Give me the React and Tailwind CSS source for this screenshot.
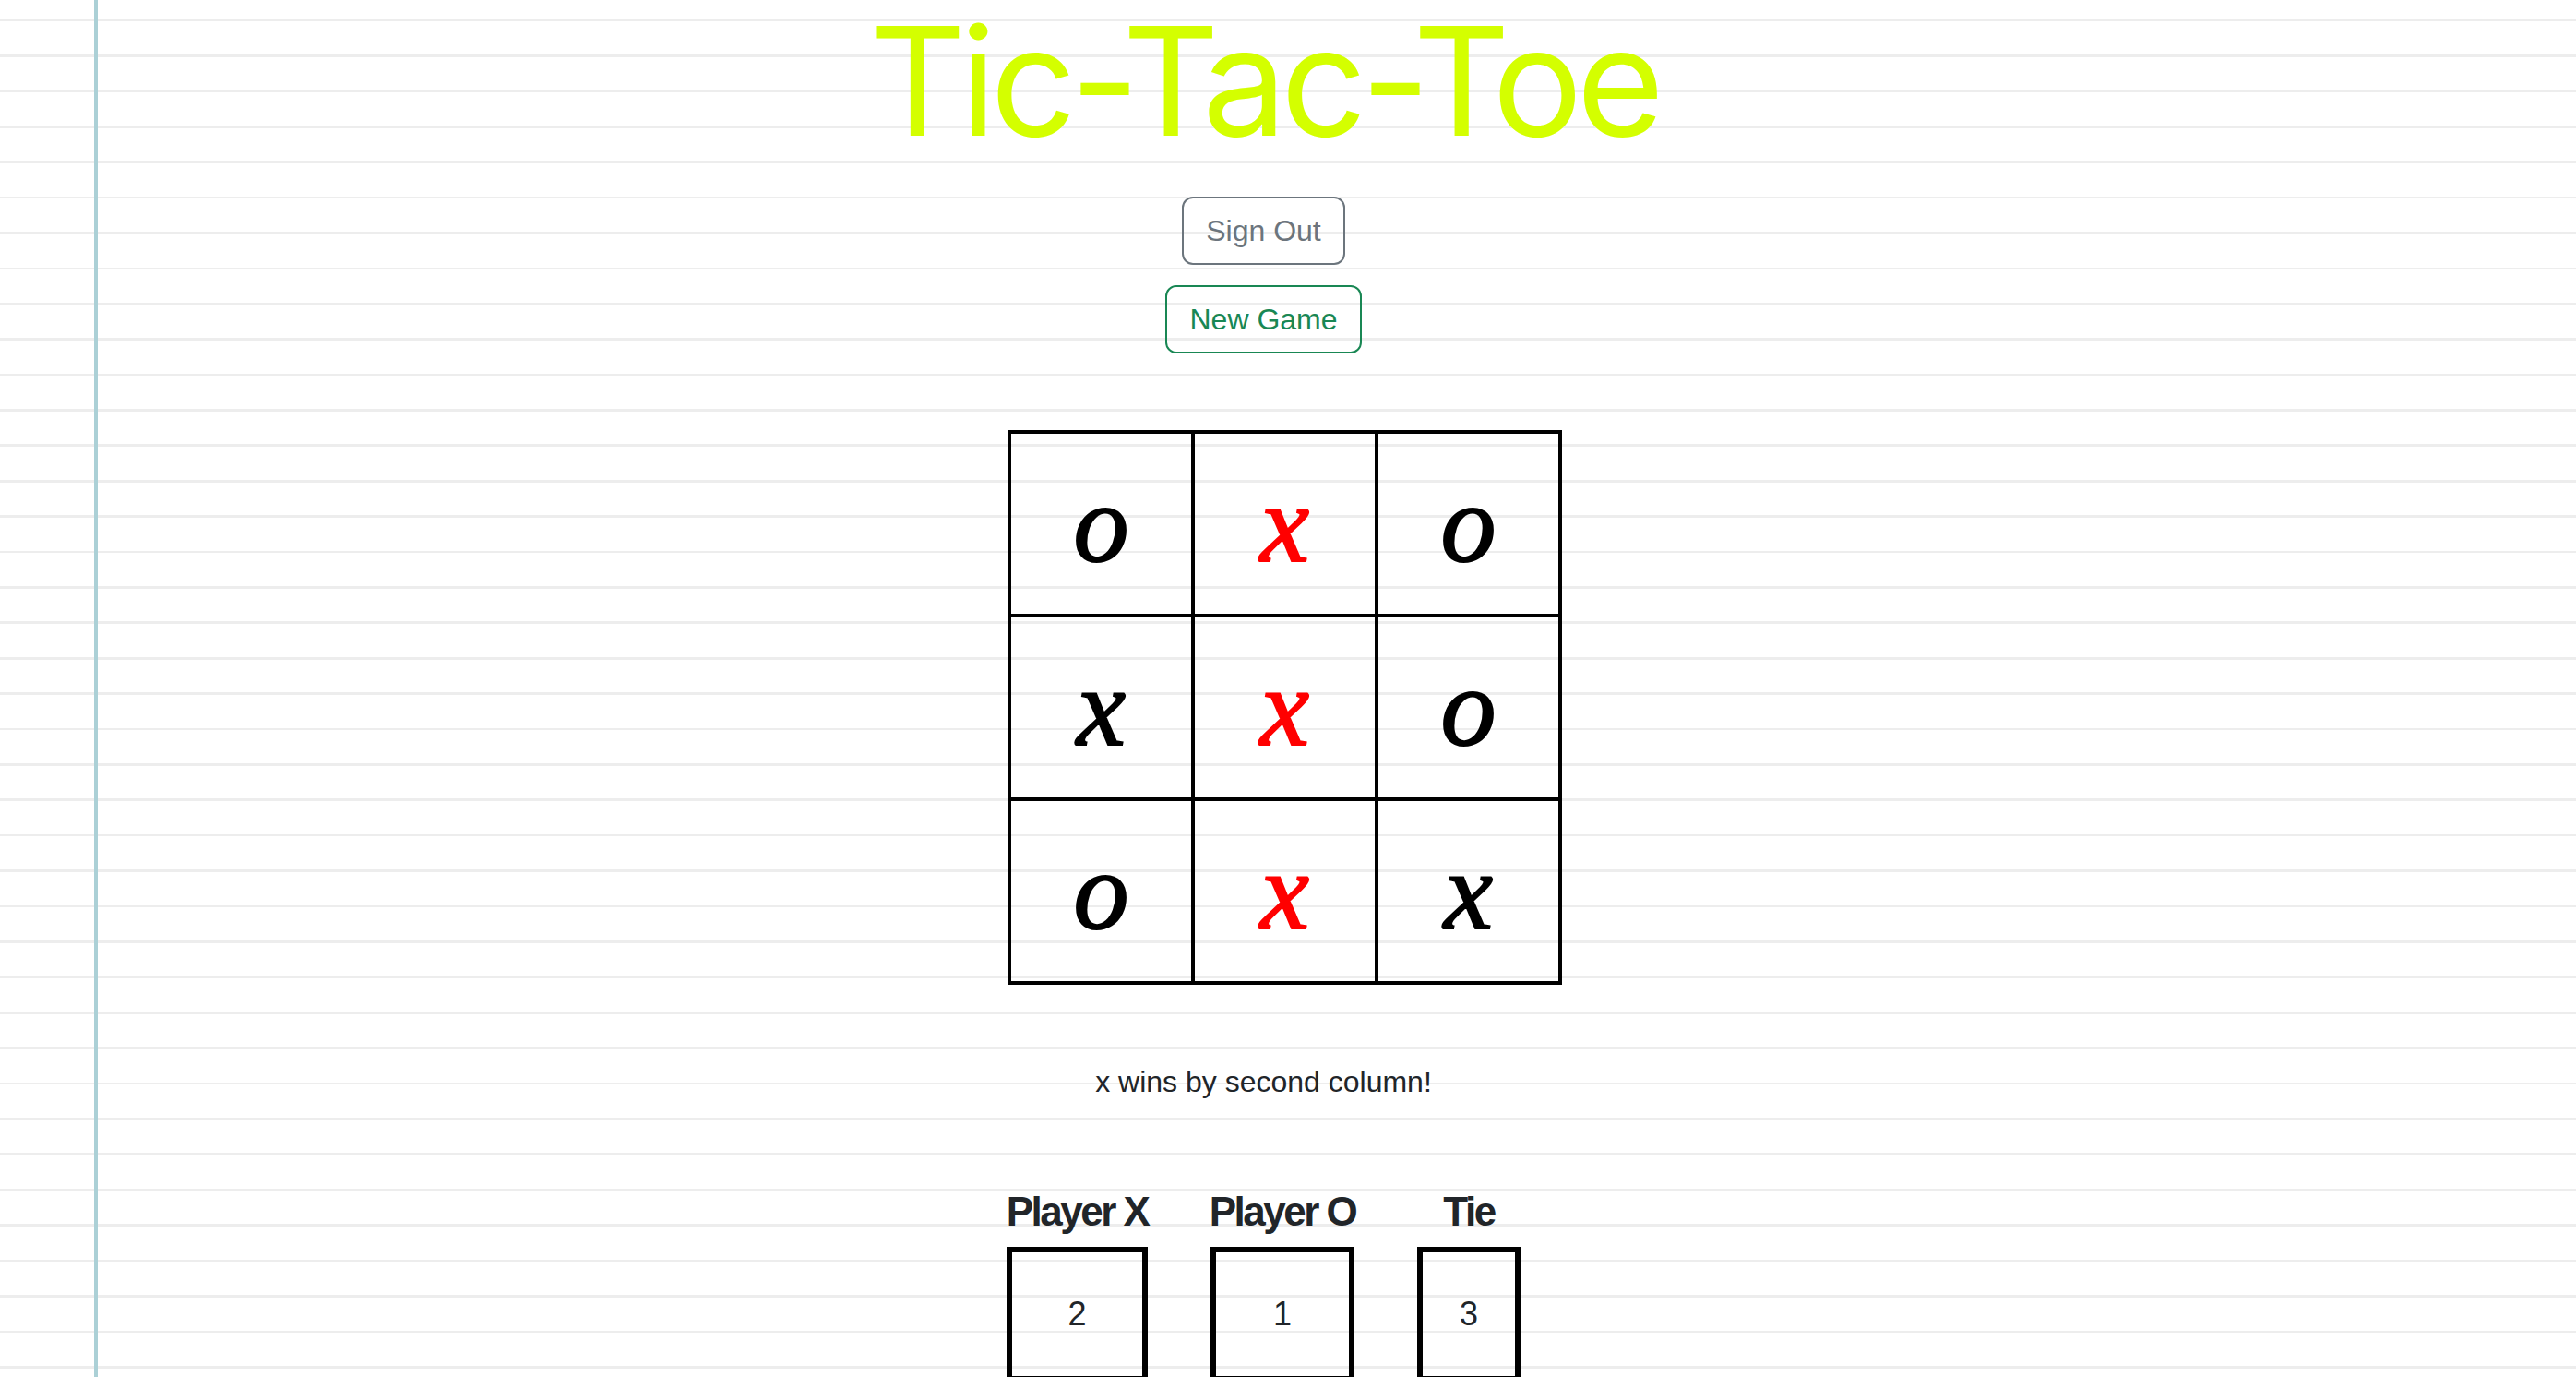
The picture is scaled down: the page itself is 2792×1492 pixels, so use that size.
import { useState } from 'react'

const board = [
  ['o', 'x', 'o'],
  ['x', 'x', 'o'],
  ['o', 'x', 'x'],
]

const winning = [1, 4, 7]

const scores = [
  { label: 'Player X', value: 2, width: 'w-[153px]' },
  { label: 'Player O', value: 1, width: 'w-[156px]' },
  { label: 'Tie', value: 3, width: 'w-[112px]' },
]

export default function App() {
  const [cells] = useState(board.flat())

  return (
    <div className="relative min-h-screen bg-white bg-[repeating-linear-gradient(to_bottom,transparent_0px,transparent_20.7px,#ededed_20.7px,#ededed_23.3px,transparent_23.3px,transparent_38.4px)] font-['Liberation_Sans',Arial,sans-serif]">
      <div className="absolute left-[102px] top-0 bottom-0 w-[4px] bg-[#abd0d6]" />

      <div className="flex flex-col items-center pr-[53px] pt-[6px] pb-[40px]">
        <h1 className="h-[163px] font-['Inter',sans-serif] text-[163px] leading-none text-[#d4ff00] tracking-[-6.5px] whitespace-nowrap">
          Tic-Tac-Toe
        </h1>

        <button className="mt-[44px] h-[74px] px-[24px] rounded-[12px] border-2 border-[#6c757d] text-[#6c757d] text-[32px] leading-none">
          Sign Out
        </button>
        <button className="mt-[22px] h-[74px] px-[24px] rounded-[12px] border-2 border-[#198754] text-[#198754] text-[32px] leading-none">
          New Game
        </button>

        <div className="mt-[83px] ml-[46px] grid grid-cols-3 border-l-4 border-t-4 border-black">
          {cells.map((c, i) => (
            <div
              key={i}
              className={`w-[199px] h-[199px] border-r-4 border-b-4 border-black flex items-center justify-center font-['Liberation_Serif','Times_New_Roman',serif] italic text-[120px] leading-none [-webkit-text-stroke:2px_currentColor] ${winning.includes(i) ? 'text-[#ff0000]' : 'text-black'}`}
            >
              {c}
            </div>
          ))}
        </div>

        <p className="mt-[81px] text-[32px] leading-[48px] text-[#212529]">x wins by second column!</p>

        <div className="mt-[91px] flex gap-[68px]">
          {scores.map((s) => (
            <div key={s.label} className={`${s.width} flex flex-col items-center`}>
              <h4 className="text-[44px] leading-[1.2] font-bold tracking-[-2.5px] text-[#212529] whitespace-nowrap">
                {s.label}
              </h4>
              <div className="mt-[11px] w-full h-[146px] border-[6px] border-black flex items-center justify-center text-[36px] text-[#212529]">
                {s.value}
              </div>
            </div>
          ))}
        </div>
      </div>
    </div>
  )
}
